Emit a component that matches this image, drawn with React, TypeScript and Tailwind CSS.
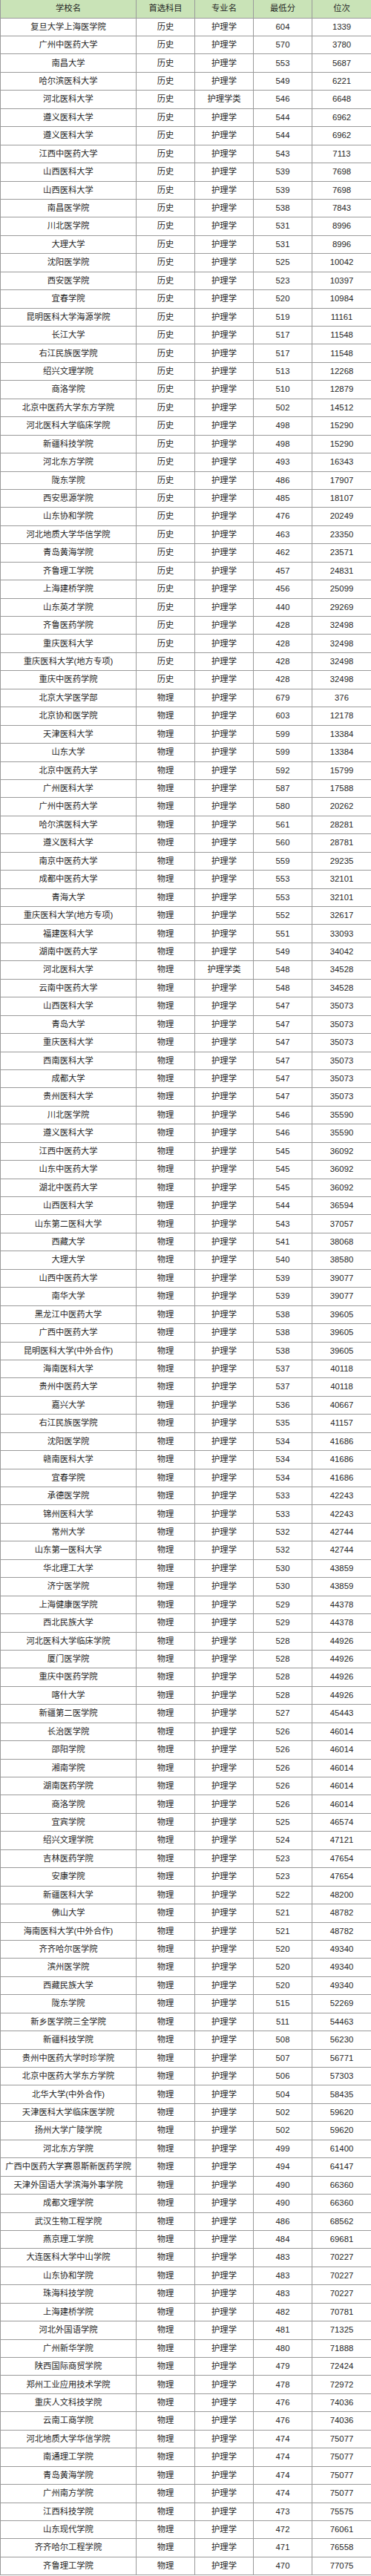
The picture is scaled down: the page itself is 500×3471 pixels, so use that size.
const history: [string, string, number, number][] = [
  ['复旦大学上海医学院', '护理学', 604, 1339],
  ['广州中医药大学', '护理学', 570, 3780],
  ['南昌大学', '护理学', 553, 5687],
  ['哈尔滨医科大学', '护理学', 549, 6221],
  ['河北医科大学', '护理学类', 546, 6648],
  ['遵义医科大学', '护理学', 544, 6962],
  ['遵义医科大学', '护理学', 544, 6962],
  ['江西中医药大学', '护理学', 543, 7113],
  ['山西医科大学', '护理学', 539, 7698],
  ['山西医科大学', '护理学', 539, 7698],
  ['南昌医学院', '护理学', 538, 7843],
  ['川北医学院', '护理学', 531, 8996],
  ['大理大学', '护理学', 531, 8996],
  ['沈阳医学院', '护理学', 525, 10042],
  ['西安医学院', '护理学', 523, 10397],
  ['宜春学院', '护理学', 520, 10984],
  ['昆明医科大学海源学院', '护理学', 519, 11161],
  ['长江大学', '护理学', 517, 11548],
  ['右江民族医学院', '护理学', 517, 11548],
  ['绍兴文理学院', '护理学', 513, 12268],
  ['商洛学院', '护理学', 510, 12879],
  ['北京中医药大学东方学院', '护理学', 502, 14512],
  ['河北医科大学临床学院', '护理学', 498, 15290],
  ['新疆科技学院', '护理学', 498, 15290],
  ['河北东方学院', '护理学', 493, 16343],
  ['陇东学院', '护理学', 486, 17907],
  ['西安思源学院', '护理学', 485, 18107],
  ['山东协和学院', '护理学', 476, 20249],
  ['河北地质大学华信学院', '护理学', 463, 23350],
  ['青岛黄海学院', '护理学', 462, 23571],
  ['齐鲁理工学院', '护理学', 457, 24831],
  ['上海建桥学院', '护理学', 456, 25099],
  ['山东英才学院', '护理学', 440, 29269],
  ['齐鲁医药学院', '护理学', 428, 32498],
  ['重庆医科大学', '护理学', 428, 32498],
  ['重庆医科大学(地方专项)', '护理学', 428, 32498],
  ['重庆中医药学院', '护理学', 428, 32498],
];

const physics: [string, string, number, number][] = [
  ['北京大学医学部', '护理学', 679, 376],
  ['北京协和医学院', '护理学', 603, 12178],
  ['天津医科大学', '护理学', 599, 13384],
  ['山东大学', '护理学', 599, 13384],
  ['北京中医药大学', '护理学', 592, 15799],
  ['广州医科大学', '护理学', 587, 17588],
  ['广州中医药大学', '护理学', 580, 20262],
  ['哈尔滨医科大学', '护理学', 561, 28281],
  ['遵义医科大学', '护理学', 560, 28781],
  ['南京中医药大学', '护理学', 559, 29235],
  ['成都中医药大学', '护理学', 553, 32101],
  ['青海大学', '护理学', 553, 32101],
  ['重庆医科大学(地方专项)', '护理学', 552, 32617],
  ['福建医科大学', '护理学', 551, 33093],
  ['湖南中医药大学', '护理学', 549, 34042],
  ['河北医科大学', '护理学类', 548, 34528],
  ['云南中医药大学', '护理学', 548, 34528],
  ['山西医科大学', '护理学', 547, 35073],
  ['青岛大学', '护理学', 547, 35073],
  ['重庆医科大学', '护理学', 547, 35073],
  ['西南医科大学', '护理学', 547, 35073],
  ['成都大学', '护理学', 547, 35073],
  ['贵州医科大学', '护理学', 547, 35073],
  ['川北医学院', '护理学', 546, 35590],
  ['遵义医科大学', '护理学', 546, 35590],
  ['江西中医药大学', '护理学', 545, 36092],
  ['山东中医药大学', '护理学', 545, 36092],
  ['湖北中医药大学', '护理学', 545, 36092],
  ['山西医科大学', '护理学', 544, 36594],
  ['山东第二医科大学', '护理学', 543, 37057],
  ['西藏大学', '护理学', 541, 38068],
  ['大理大学', '护理学', 540, 38580],
  ['山西中医药大学', '护理学', 539, 39077],
  ['南华大学', '护理学', 539, 39077],
  ['黑龙江中医药大学', '护理学', 538, 39605],
  ['广西中医药大学', '护理学', 538, 39605],
  ['昆明医科大学(中外合作)', '护理学', 538, 39605],
  ['海南医科大学', '护理学', 537, 40118],
  ['贵州中医药大学', '护理学', 537, 40118],
  ['嘉兴大学', '护理学', 536, 40667],
  ['右江民族医学院', '护理学', 535, 41157],
  ['沈阳医学院', '护理学', 534, 41686],
  ['赣南医科大学', '护理学', 534, 41686],
  ['宜春学院', '护理学', 534, 41686],
  ['承德医学院', '护理学', 533, 42243],
  ['锦州医科大学', '护理学', 533, 42243],
  ['常州大学', '护理学', 532, 42744],
  ['山东第一医科大学', '护理学', 532, 42744],
  ['华北理工大学', '护理学', 530, 43859],
  ['济宁医学院', '护理学', 530, 43859],
  ['上海健康医学院', '护理学', 529, 44378],
  ['西北民族大学', '护理学', 529, 44378],
  ['河北医科大学临床学院', '护理学', 528, 44926],
  ['厦门医学院', '护理学', 528, 44926],
  ['重庆中医药学院', '护理学', 528, 44926],
  ['喀什大学', '护理学', 528, 44926],
  ['新疆第二医学院', '护理学', 527, 45443],
  ['长治医学院', '护理学', 526, 46014],
  ['邵阳学院', '护理学', 526, 46014],
  ['湘南学院', '护理学', 526, 46014],
  ['湖南医药学院', '护理学', 526, 46014],
  ['商洛学院', '护理学', 526, 46014],
  ['宜宾学院', '护理学', 525, 46574],
  ['绍兴文理学院', '护理学', 524, 47121],
  ['吉林医药学院', '护理学', 523, 47654],
  ['安康学院', '护理学', 523, 47654],
  ['新疆医科大学', '护理学', 522, 48200],
  ['佛山大学', '护理学', 521, 48782],
  ['海南医科大学(中外合作)', '护理学', 521, 48782],
  ['齐齐哈尔医学院', '护理学', 520, 49340],
  ['滨州医学院', '护理学', 520, 49340],
  ['西藏民族大学', '护理学', 520, 49340],
  ['陇东学院', '护理学', 515, 52269],
  ['新乡医学院三全学院', '护理学', 511, 54463],
  ['新疆科技学院', '护理学', 508, 56230],
  ['贵州中医药大学时珍学院', '护理学', 507, 56771],
  ['北京中医药大学东方学院', '护理学', 506, 57303],
  ['北华大学(中外合作)', '护理学', 504, 58435],
  ['天津医科大学临床医学院', '护理学', 502, 59620],
  ['扬州大学广陵学院', '护理学', 502, 59620],
  ['河北东方学院', '护理学', 499, 61400],
  ['广西中医药大学赛恩斯新医药学院', '护理学', 494, 64147],
  ['天津外国语大学滨海外事学院', '护理学', 490, 66360],
  ['成都文理学院', '护理学', 490, 66360],
  ['武汉生物工程学院', '护理学', 486, 68562],
  ['燕京理工学院', '护理学', 484, 69681],
  ['大连医科大学中山学院', '护理学', 483, 70227],
  ['山东协和学院', '护理学', 483, 70227],
  ['珠海科技学院', '护理学', 483, 70227],
  ['上海建桥学院', '护理学', 482, 70781],
  ['河北外国语学院', '护理学', 481, 71325],
  ['广州新华学院', '护理学', 480, 71888],
  ['陕西国际商贸学院', '护理学', 479, 72424],
  ['郑州工业应用技术学院', '护理学', 478, 72972],
  ['重庆人文科技学院', '护理学', 476, 74036],
  ['云南工商学院', '护理学', 476, 74036],
  ['河北地质大学华信学院', '护理学', 474, 75077],
  ['南通理工学院', '护理学', 474, 75077],
  ['青岛黄海学院', '护理学', 474, 75077],
  ['广州南方学院', '护理学', 474, 75077],
  ['江西科技学院', '护理学', 473, 75575],
  ['山东现代学院', '护理学', 472, 76061],
  ['齐齐哈尔工程学院', '护理学', 471, 76558],
  ['齐鲁理工学院', '护理学', 470, 77075],
];

const rows = [
  ...history.map(([name, major, score, rank]) => ({ name, subject: '历史', major, score, rank })),
  ...physics.map(([name, major, score, rank]) => ({ name, subject: '物理', major, score, rank })),
];

const cell =
  'flex items-center justify-center border-r border-b border-[#9a9a9a] whitespace-nowrap';

function Row({ cells, head }: { cells: (string | number)[]; head?: boolean }) {
  return (
    <div
      className={
        'grid grid-cols-[183px_79px_79px_79px_80px] ' +
        (head ? 'h-[24.6px] bg-[#c9e3b7]' : 'h-[24.44px] bg-white')
      }
    >
      {cells.map((c, i) => (
        <div key={i} className={cell}>
          {c}
        </div>
      ))}
    </div>
  );
}

export default function App() {
  return (
    <div
      className="w-[500px] bg-white text-[11.3px] leading-none text-[#262626] border-l border-[#9a9a9a]"
      style={{ fontFamily: '"Liberation Sans", "Noto Sans CJK SC", sans-serif' }}
    >
      <Row head cells={['学校名', '首选科目', '专业名', '最低分', '位次']} />
      {rows.map((r, i) => (
        <Row key={i} cells={[r.name, r.subject, r.major, r.score, r.rank]} />
      ))}
    </div>
  );
}
